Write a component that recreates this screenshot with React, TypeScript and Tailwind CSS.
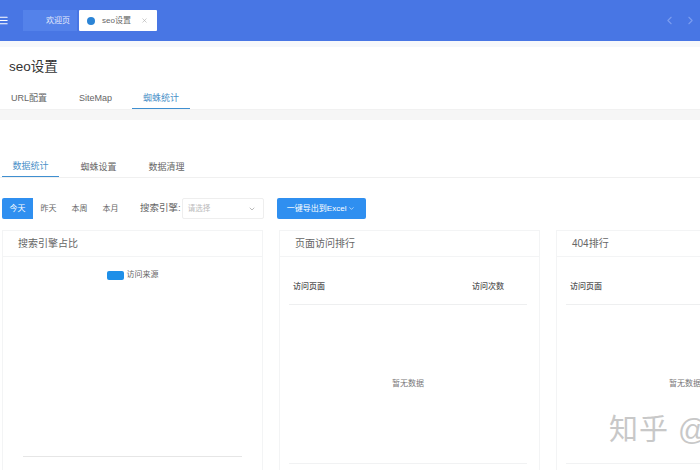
import { ChevronDown, ChevronLeft, ChevronRight, Menu, X } from "lucide-react";

const pageTabs = ["URL配置", "SiteMap", "蜘蛛统计"];
const dataTabs = ["数据统计", "蜘蛛设置", "数据清理"];
const ranges = ["昨天", "本周", "本月"];

function RankCard({ title, valueLabel }: { title: string; valueLabel?: string }) {
  return (
    <section className="w-[261px] shrink-0 border border-[#f3f4f5] bg-white">
      <h3 className="flex h-[26px] items-center border-b border-[#f3f4f5] pl-[15px] text-[10px] text-[#666]">
        {title}
      </h3>
      <div className="pl-[9px] pr-[12px]">
        <div className="flex h-[48px] items-center justify-between border-b border-[#eeeff0] pl-[4px] pr-[23px] pt-[12px] text-[8px] font-medium text-[#555]">
          <span>访问页面</span>
          {valueLabel ? <span>{valueLabel}</span> : null}
        </div>
        <div className="flex h-[159px] items-center justify-center border-b border-[#f1f2f3] text-[8px] text-[#777]">
          暂无数据
        </div>
      </div>
    </section>
  );
}

export default function App() {
  return (
    <div className="relative h-[470px] w-[700px] overflow-hidden bg-white font-['Liberation_Sans','Noto_Sans_CJK_SC',sans-serif]">
      <header className="flex h-[41px] items-center bg-[#4876e4] shadow-[0_1px_0_#5b79c9]">
        <Menu className="ml-[-2px] h-[11px] w-[11px] text-white" strokeWidth={2.2} />
        <div className="ml-[14px] flex h-[21px] w-[54px] items-center justify-end bg-[#5482ea] pr-[7px] text-[8px] text-[#e4ebfb]">
          欢迎页
        </div>
        <div className="ml-[2px] flex h-[21px] w-[78px] items-center rounded-[1px] bg-white pl-[8px] text-[8px] text-[#666]">
          <span className="h-[8px] w-[8px] rounded-full bg-[#2b84d6]" />
          <span className="ml-[7px]">seo设置</span>
          <X className="ml-[10px] h-[7px] w-[7px] text-[#aaa]" />
        </div>
        <div className="ml-auto flex items-center gap-[8px] pr-[3px] text-[#7a9df0]">
          <ChevronLeft className="h-[13px] w-[13px]" />
          <ChevronRight className="h-[13px] w-[13px]" />
        </div>
      </header>
      <div className="h-[6px] bg-[#f6f8fb]" />

      <div className="h-[63px] border-b border-[#f1f1f1] bg-white">
        <h1 className="pl-[9px] pt-[11px] text-[13.5px] leading-[18px] text-[#333]">seo设置</h1>
        <nav className="mt-[10px] flex text-[9px] text-[#666]">
          {pageTabs.map((tab, i) => (
            <span
              key={tab}
              className={`flex h-[23px] items-center pt-[3px] ${
                i === 0 ? "ml-[11px] w-[68px]" : i === 1 ? "w-[53px]" : "w-[58px] justify-center border-b border-[#3f8fd0] text-[#4a90c8]"
              }`}
            >
              {tab}
            </span>
          ))}
        </nav>
      </div>
      <div className="h-[10px] bg-[#f6f6f6]" />

      <nav className="mt-[30px] flex h-[28px] border-b border-[#f0f0f0] pl-[2px] text-[9px] text-[#666]">
        {dataTabs.map((tab, i) => (
          <span
            key={tab}
            className={`flex items-center justify-center pt-[8px] ${
              i === 0 ? "w-[57px] border-b border-[#3f8fd0] text-[#4a90c8]" : "ml-[11px] w-[57px]"
            }`}
          >
            {tab}
          </span>
        ))}
      </nav>

      <div className="mt-[20px] flex h-[21px] items-center pl-[2px]">
        <span className="flex h-[21px] w-[31px] items-center justify-center rounded-l-[2px] bg-[#2f8ff0] text-[8px] text-white">
          今天
        </span>
        {ranges.map((range) => (
          <span key={range} className="flex h-[21px] w-[31px] items-center justify-center text-[8px] text-[#666]">
            {range}
          </span>
        ))}
        <span className="ml-[14px] text-[9.5px] text-[#666]">搜索引擎:</span>
        <div className="ml-[1px] flex h-[21px] w-[82px] items-center justify-between rounded-[2px] border border-[#eeeeee] pl-[5px] pr-[7px] text-[7.5px] text-[#bbb]">
          请选择
          <ChevronDown className="h-[8px] w-[8px] text-[#999]" />
        </div>
        <button
          type="button"
          className="ml-[13px] flex h-[21px] w-[89px] items-center justify-center gap-[2px] rounded-[2px] bg-[#2f8ff0] text-[8px] text-white"
        >
          一键导出到Excel
          <ChevronDown className="h-[7px] w-[7px]" />
        </button>
      </div>

      <div className="mt-[11px] flex gap-[16px] pl-[2px]">
        <section className="h-[250px] w-[261px] shrink-0 border border-[#f3f4f5] bg-white">
          <h3 className="flex h-[26px] items-center border-b border-[#f3f4f5] pl-[15px] text-[10px] text-[#666]">
            搜索引擎占比
          </h3>
          <div className="flex items-center justify-center gap-[3px] pt-[12px] text-[8px] text-[#666]">
            <span className="h-[9px] w-[17px] rounded-[2px] bg-[#1e8fe8]" />
            访问来源
          </div>
          <div className="mx-[20px] mt-[175px] h-px bg-[#e6e6e6]" />
        </section>
        <RankCard title="页面访问排行" valueLabel="访问次数" />
        <RankCard title="404排行" />
      </div>

      <div className="absolute left-[609px] top-[412px] whitespace-nowrap text-[29px] leading-[36px] tracking-[1px] text-[#c8c8c8]">
        知乎 @
      </div>
    </div>
  );
}
